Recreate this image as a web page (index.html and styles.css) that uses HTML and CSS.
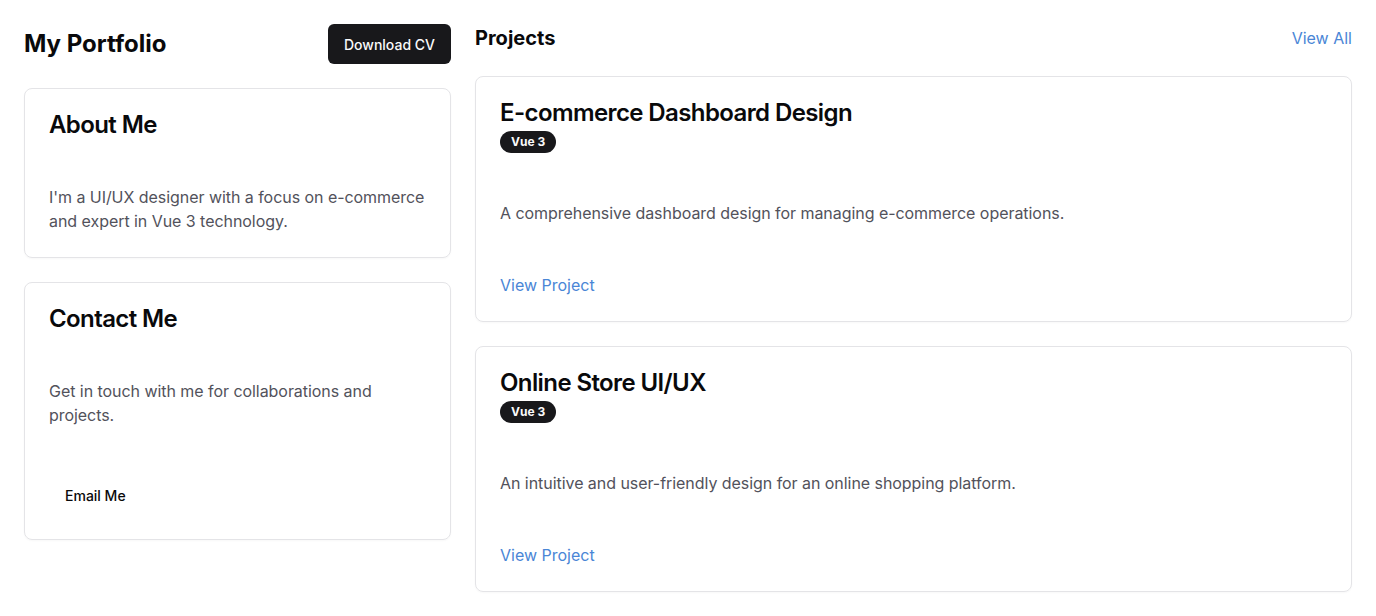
FILE: index.html
```html
<!DOCTYPE html>
<html lang="en">
<head>
<meta charset="utf-8">
<title>My Portfolio</title>
<link rel="stylesheet" href="styles.css">
</head>
<body>
<div class="page">
  <aside class="side">
    <header class="side-head">
      <h1 class="page-title">My Portfolio</h1>
      <button class="btn btn-dark">Download CV</button>
    </header>
    <section class="card">
      <h2 class="card-title">About Me</h2>
      <p class="card-text">I'm a UI/UX designer with a focus on e-commerce and expert in Vue 3 technology.</p>
    </section>
    <section class="card">
      <h2 class="card-title">Contact Me</h2>
      <p class="card-text">Get in touch with me for collaborations and projects.</p>
      <div class="card-foot"><button class="btn btn-ghost">Email Me</button></div>
    </section>
  </aside>
  <main class="main">
    <header class="main-head">
      <h2 class="section-title">Projects</h2>
      <a class="link" href="#">View All</a>
    </header>
    <article class="card project">
      <div class="project-head">
        <h3 class="card-title">E-commerce Dashboard Design</h3>
        <span class="badge">Vue 3</span>
      </div>
      <p class="card-text">A comprehensive dashboard design for managing e-commerce operations.</p>
      <a class="link" href="#">View Project</a>
    </article>
    <article class="card project">
      <div class="project-head">
        <h3 class="card-title">Online Store UI/UX</h3>
        <span class="badge">Vue 3</span>
      </div>
      <p class="card-text">An intuitive and user-friendly design for an online shopping platform.</p>
      <a class="link" href="#">View Project</a>
    </article>
  </main>
</div>
</body>
</html>
```
FILE: styles.css
```css
* { box-sizing: border-box; }
html, body { margin: 0; padding: 0; background: #ffffff; }
body {
  font-family: Inter, "Noto Sans", sans-serif;
  color: #09090b;
}
h1, h2, h3, p { margin: 0; }

.page {
  display: grid;
  grid-template-columns: 427px 1fr;
  gap: 24px;
  padding: 24px;
}

.side { display: flex; flex-direction: column; gap: 24px; }
.side-head {
  display: flex;
  justify-content: space-between;
  align-items: center;
  height: 40px;
}
.page-title {
  font-size: 24px;
  font-weight: 700;
  line-height: 32px;
}

.btn {
  font-family: Inter, "Noto Sans", sans-serif;
  font-size: 14px;
  font-weight: 500;
  height: 40px;
  padding: 0 16px;
  border: none;
  border-radius: 6px;
  cursor: pointer;
}
.btn-dark { background: #18181b; color: #fafafa; }
.btn-ghost { background: transparent; color: #09090b; }

.card {
  border: 1px solid #e4e4e7;
  border-radius: 8px;
  padding: 24px;
  display: flex;
  flex-direction: column;
  align-items: flex-start;
  gap: 48px;
  box-shadow: 0 1px 2px rgba(0,0,0,0.03);
}
.card-title {
  font-size: 24px;
  font-weight: 600;
  line-height: 24px;
  letter-spacing: -0.6px;
}
.card-text {
  font-size: 16px;
  line-height: 24px;
  color: #52525b;
  letter-spacing: -0.05px;
}

.main { display: flex; flex-direction: column; gap: 24px; }
.main-head {
  display: flex;
  justify-content: space-between;
  align-items: center;
  height: 28px;
}
.section-title {
  font-size: 20px;
  font-weight: 700;
  line-height: 28px;
}
.link {
  color: #4a86d6;
  text-decoration: none;
  font-size: 16px;
  line-height: 24px;
}

.project-head {
  display: flex;
  flex-direction: column;
  align-items: flex-start;
  gap: 6px;
}
.badge {
  background: #18181b;
  color: #fafafa;
  font-size: 12px;
  font-weight: 700;
  line-height: 16px;
  padding: 3px 11px;
  border-radius: 999px;
}
```
